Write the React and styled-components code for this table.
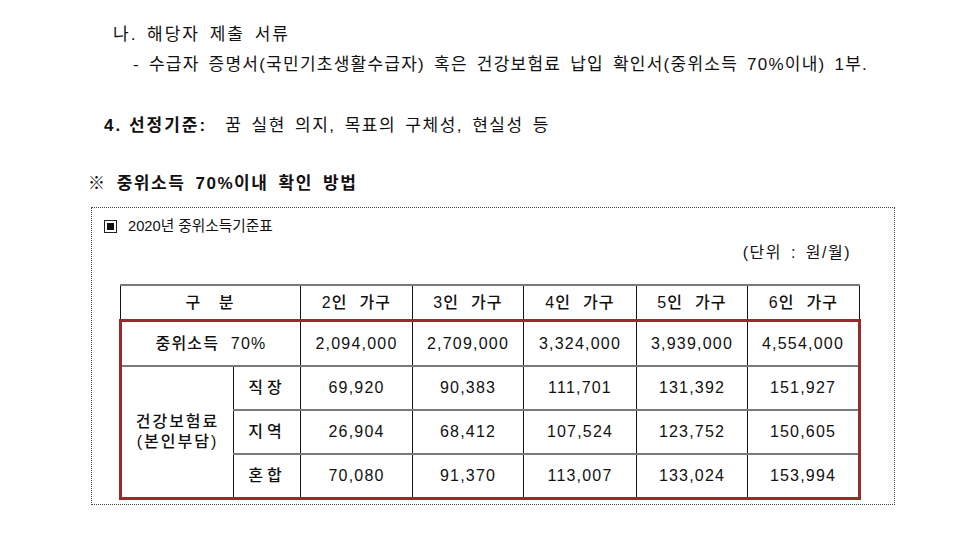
import React from "react";
import styled, { createGlobalStyle } from "styled-components";

const Global = createGlobalStyle`
  html, body { margin: 0; padding: 0; background: #fff; }
  body { font-family: "Liberation Sans", "Noto Sans CJK KR", sans-serif; color: #111; }
`;

const Page = styled.div`
  width: 975px;
  height: 535px;
  overflow: hidden;
  background: #fff;
  padding-top: 25px;
  box-sizing: border-box;
`;

const Line = styled.div`
  margin-left: ${(p) => p.$left}px;
  margin-top: ${(p) => p.$top || 0}px;
  font-size: 17px;
  line-height: 20px;
  height: 20px;
  white-space: nowrap;
  font-weight: ${(p) => (p.$bold ? 700 : 400)};
  letter-spacing: ${(p) => p.$ls ?? 2}px;
  word-spacing: ${(p) => p.$ws || 0}px;
`;

const Strong = styled.span`
  font-weight: 700;
  margin-right: 18px;
  letter-spacing: 2px;
  word-spacing: 0;
`;

const Mark = styled.span`
  font-family: "Noto Sans CJK KR", sans-serif;
  font-weight: 900;
`;

const Box = styled.div`
  margin: 15px 0 0 91px;
  width: 804px;
  height: 298px;
  box-sizing: border-box;
  border: 1px dotted #444;
  padding: 8px 0 0 12px;
`;

const BoxTitle = styled.div`
  display: flex;
  align-items: center;
  gap: 11px;
  font-size: 14.7px;
  line-height: 20px;
  height: 20px;
`;

const Square = styled.span`
  width: 13px;
  height: 13px;
  border: 1px solid #222;
  box-sizing: border-box;
  display: flex;
  align-items: center;
  justify-content: center;
  &::after {
    content: "";
    width: 7px;
    height: 7px;
    background: #111;
  }
`;

const Unit = styled.div`
  text-align: right;
  padding-right: 43px;
  margin-top: 7px;
  font-size: 16px;
  line-height: 20px;
  height: 20px;
  letter-spacing: 1.5px;
  word-spacing: 3px;
`;

const Table = styled.table`
  margin: 21px 0 0 15px;
  border-collapse: collapse;
  table-layout: fixed;
  width: 739px;
  font-size: 16px;
  color: #111;
`;

const Body = styled.tbody`
  border: 3px solid #9a2a2a;
`;

const Cell = styled.td`
  border-left: 1px solid #111;
  border-right: 1px solid #111;
  border-top: 2px solid #7a7a7a;
  border-bottom: 2px solid #7a7a7a;
  text-align: center;
  padding: 0;
  height: ${(p) => p.$h || 42}px;
  letter-spacing: ${(p) => p.$ls ?? 1.2}px;
  word-spacing: ${(p) => p.$ws ?? 6}px;
  line-height: 20px;
  font-weight: ${(p) => (p.$num ? 400 : 500)};
`;

const HeadCell = styled(Cell).attrs({ as: "th" })`
  border-bottom: none;
`;

const Cols = [113, 67, 112, 111, 113, 111, 112];

const rows = [
  ["직장", "69,920", "90,383", "111,701", "131,392", "151,927"],
  ["지역", "26,904", "68,412", "107,524", "123,752", "150,605"],
  ["혼합", "70,080", "91,370", "113,007", "133,024", "153,994"],
];

const heads = ["2인 가구", "3인 가구", "4인 가구", "5인 가구", "6인 가구"];
const mid = ["2,094,000", "2,709,000", "3,324,000", "3,939,000", "4,554,000"];

export default function App() {
  return (
    <Page>
      <Global />
      <Line $left={113} $ws={3}>나. 해당자 제출 서류</Line>
      <Line $left={133} $top={10} $ls={1.25} $ws={3}>
        - 수급자 증명서(국민기초생활수급자) 혹은 건강보험료 납입 확인서(중위소득 70%이내) 1부.
      </Line>
      <Line $left={104} $top={41} $ls={1.5} $ws={3}>
        <Strong>4. 선정기준:</Strong>꿈 실현 의지, 목표의 구체성, 현실성 등
      </Line>
      <Line $left={88} $top={36} $bold $ls={1.5} $ws={4}>
        <Mark>※</Mark> 중위소득 70%이내 확인 방법
      </Line>
      <Box>
        <BoxTitle>
          <Square />
          <span>2020년 중위소득기준표</span>
        </BoxTitle>
        <Unit>(단위 : 원/월)</Unit>
        <Table>
          <colgroup>
            {Cols.map((w, i) => (
              <col key={i} style={{ width: w }} />
            ))}
          </colgroup>
          <thead>
            <tr>
              <HeadCell colSpan={2} $h={33} $ls={2} $ws={10}>구 분</HeadCell>
              {heads.map((h) => (
                <HeadCell key={h} $h={33}>{h}</HeadCell>
              ))}
            </tr>
          </thead>
          <Body>
            <tr>
              <Cell colSpan={2} $h={43}>중위소득 70%</Cell>
              {mid.map((v) => (
                <Cell key={v} $h={43} $num>{v}</Cell>
              ))}
            </tr>
            {rows.map((r, i) => (
              <tr key={i}>
                {i === 0 && (
                  <Cell rowSpan={3} $ls={2} $ws={0}>
                    건강보험료
                    <br />
                    (본인부담)
                  </Cell>
                )}
                {r.map((v, j) =>
                  j === 0 ? (
                    <Cell key={j} $ls={4} $ws={0}>{v}</Cell>
                  ) : (
                    <Cell key={j} $num>{v}</Cell>
                  )
                )}
              </tr>
            ))}
          </Body>
        </Table>
      </Box>
    </Page>
  );
}
